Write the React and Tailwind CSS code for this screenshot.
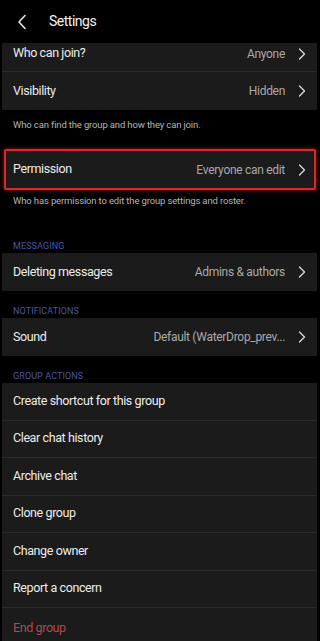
import React from "react";

function Chevron() {
  return (
    <svg width="8" height="12" viewBox="0 0 8 12" className="shrink-0">
      <path d="M1.5 1 L6.5 6 L1.5 11" fill="none" stroke="#d8d8d8" strokeWidth="1.4" strokeLinecap="round" strokeLinejoin="round" />
    </svg>
  );
}

function Row({ label, value, last, red, className = "" }) {
  return (
    <div className={`flex items-center h-[37.5px] pl-[11px] pr-[11px] ${last ? "" : "border-b border-[#2a2a2a]"} ${className}`}>
      <span className={`text-[12.5px] tracking-[-0.4px] ${red ? "text-[#b8454f]" : "text-[#ececec]"}`}>{label}</span>
      {value !== undefined && (
        <>
          <span className="ml-auto text-[12px] tracking-[-0.3px] text-[#a9a9a9] mr-[13px]">{value}</span>
          <Chevron />
        </>
      )}
    </div>
  );
}

function Section({ title, className = "" }) {
  return (
    <div className={`pl-[13px] text-[9px] tracking-[0.1px] text-[#4658a8] leading-none ${className}`}>{title}</div>
  );
}

export default function App() {
  return (
    <div className="w-[320px] h-[641px] bg-black overflow-hidden" style={{ fontFamily: "Roboto, 'Liberation Sans', sans-serif" }}>
      {/* header */}
      <div className="h-[43px] flex items-center">
        <svg width="10" height="16" viewBox="0 0 10 16" className="ml-[17px]">
          <path d="M8 1.5 L2 8 L8 14.5" fill="none" stroke="#e6e6e6" strokeWidth="1.6" strokeLinecap="round" strokeLinejoin="round" />
        </svg>
        <span className="ml-[22px] text-[14px] tracking-[-0.5px] text-[#f2f2f2]">Settings</span>
      </div>

      {/* first card */}
      <div className="ml-[2px] mr-[3px] bg-[#1b1b1b]">
        <div className="flex items-center h-[29px] pb-[7px] pl-[11px] pr-[11px] border-b border-[#2a2a2a]">
          <span className="text-[12.5px] tracking-[-0.4px] text-[#ececec]">Who can join?</span>
          <span className="ml-auto text-[12px] tracking-[-0.3px] text-[#a9a9a9] mr-[13px]">Anyone</span>
          <Chevron />
        </div>
        <Row label="Visibility" value="Hidden" last className="h-[38px]" />
      </div>
      <div className="pl-[13px] h-[39px] pt-[8px] text-[9.5px] tracking-[-0.15px] text-[#b4b4b4]">Who can find the group and how they can join.</div>

      <div className="ml-[4px] mr-[4px] h-[41px] border-2 border-[#e0242c] rounded-[2px] bg-[#1b1b1b] flex items-center pl-[7px] pr-[8px] shadow-[0_0_4px_rgba(224,36,44,0.7)]">
        <span className="text-[12.5px] tracking-[-0.4px] text-[#ececec]">Permission</span>
        <span className="ml-auto text-[12px] tracking-[-0.3px] text-[#a9a9a9] mr-[13px]">Everyone can edit</span>
        <Chevron />
      </div>
      <div className="pl-[13px] pt-[4px] text-[9.5px] tracking-[-0.15px] text-[#b4b4b4] h-[41px]">Who has permission to edit the group settings and roster.</div>

      <Section title="MESSAGING" className="h-[22px] pt-[11px]" />
      <div className="ml-[2px] mr-[3px] bg-[#1b1b1b]">
        <Row label="Deleting messages" value="Admins & authors" last className="h-[38px]" />
      </div>

      <Section title="NOTIFICATIONS" className="h-[27px] pt-[16px]" />
      <div className="ml-[2px] mr-[3px] bg-[#1b1b1b]">
        <Row label="Sound" value="Default (WaterDrop_prev..." last className="h-[38px]" />
      </div>

      <Section title="GROUP ACTIONS" className="h-[27px] pt-[16px]" />
      <div className="ml-[2px] mr-[3px] bg-[#1b1b1b]">
        <Row label="Create shortcut for this group" />
        <Row label="Clear chat history" />
        <Row label="Archive chat" />
        <Row label="Clone group" />
        <Row label="Change owner" />
        <Row label="Report a concern" />
        <Row label="End group" red last className="h-[40px]" />
      </div>
    </div>
  );
}
